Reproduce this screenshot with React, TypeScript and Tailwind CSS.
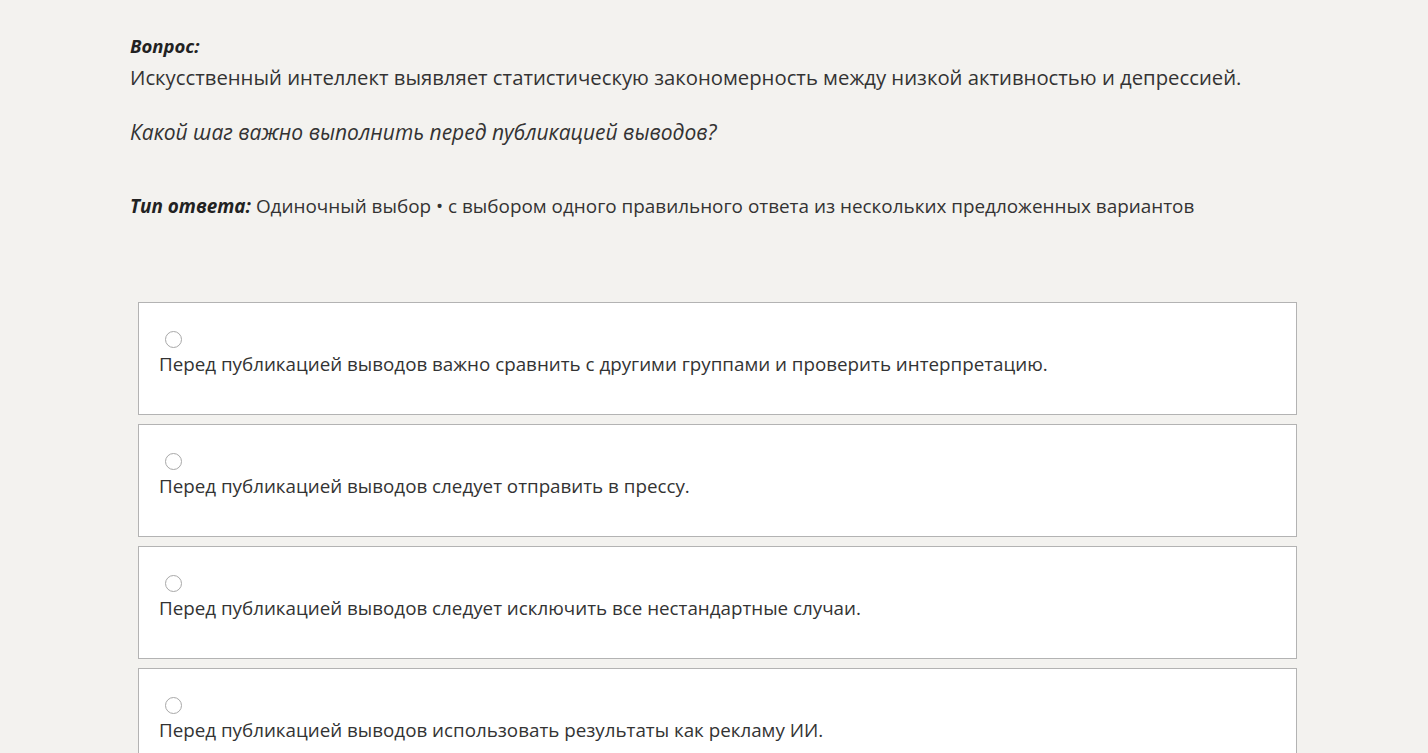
import React from "react";

const options = [
  "Перед публикацией выводов важно сравнить с другими группами и проверить интерпретацию.",
  "Перед публикацией выводов следует отправить в прессу.",
  "Перед публикацией выводов следует исключить все нестандартные случаи.",
  "Перед публикацией выводов использовать результаты как рекламу ИИ.",
];

export default function App() {
  return (
    <div
      className="min-h-screen w-full bg-[#f3f2ef] text-[#333333]"
      style={{ fontFamily: '"Open Sans", "Noto Sans", sans-serif' }}
    >
      <div className="pl-[130px] pr-[131px] pt-[34px]">
        <div className="text-[18.5px] font-bold italic leading-[24px] text-[#222]">Вопрос:</div>
        <div className="mt-[5px] text-[20.3px] leading-[28px]">
          Искусственный интеллект выявляет статистическую закономерность между низкой активностью и депрессией.
        </div>
        <div className="mt-[27px] text-[21px] italic leading-[28px]">
          Какой шаг важно выполнить перед публикацией выводов?
        </div>
        <div className="mt-[47px] text-[18.9px] leading-[26px]">
          <span className="font-bold italic text-[#222]">Тип ответа:</span> Одиночный выбор • с выбором одного правильного ответа из нескольких предложенных вариантов
        </div>
        <div className="mt-[83px] ml-[8px] flex flex-col gap-[9px]">
          {options.map((o) => (
            <div key={o} className="h-[113px] border border-[#b3b3b3] bg-white px-5 pt-[28px]">
              <div className="ml-[6px] h-[17px] w-[17px] rounded-full border border-[#a8a8a8] bg-white" />
              <div className="mt-[3px] text-[18.8px] leading-[26px]">{o}</div>
            </div>
          ))}
        </div>
      </div>
    </div>
  );
}
